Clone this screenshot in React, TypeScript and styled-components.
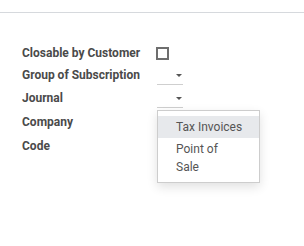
import * as React from 'react';
import styled, { createGlobalStyle } from 'styled-components';

const GlobalStyle = createGlobalStyle`
  html, body {
    margin: 0;
    padding: 0;
    background: #fff;
  }
  body {
    font-family: 'Roboto', 'Liberation Sans', Arial, sans-serif;
    color: #4c4c4c;
  }
`;

const Page = styled.div`
  position: relative;
  width: 304px;
  height: 246px;
  overflow: hidden;
`;

const TopBar = styled.div`
  height: 12px;
  border-bottom: 1px solid #d6d9dd;
`;

const Form = styled.div`
  padding: 29px 0 0 22px;
  display: flex;
  flex-direction: column;
`;

interface IRow {
  h: number;
}

const Row = styled.div<IRow>`
  display: grid;
  grid-template-columns: 135px 26px;
  align-items: center;
  height: ${({ h }) => h}px;
`;

const Label = styled.label`
  font-weight: 700;
  font-size: 12px;
  color: #4a4a4a;
  white-space: nowrap;
`;

const Checkbox = styled.span`
  display: block;
  width: 13px;
  height: 13px;
  margin-left: -1px;
  box-sizing: border-box;
  border: 2px solid #6e6e6e;
  background: #fff;
`;

const Select = styled.div`
  position: relative;
  height: 21px;
  margin-top: -1px;
  border-bottom: 1px solid #cfcfcf;
  box-sizing: border-box;

  &:after {
    content: '';
    position: absolute;
    right: 1px;
    top: 10px;
    border-left: 3.5px solid transparent;
    border-right: 3.5px solid transparent;
    border-top: 3.5px solid #555;
  }
`;

const Menu = styled.ul`
  position: absolute;
  left: 157px;
  top: 110px;
  width: 103px;
  box-sizing: border-box;
  margin: 0;
  padding: 5px 0 4px;
  list-style: none;
  background: #fff;
  border: 1px solid #cdcdcd;
  box-shadow: 0 4px 10px rgba(0, 0, 0, 0.12);
`;

interface IItem {
  active?: boolean;
}

const Item = styled.li<IItem>`
  padding: 2px 10px 2px 18px;
  font-size: 12px;
  line-height: 18px;
  white-space: nowrap;
  color: #555;
  background: ${({ active }) => (active ? '#e7e9ec' : 'transparent')};
`;

const rows = [
  { label: 'Closable by Customer', h: 22, field: 'checkbox' },
  { label: 'Group of Subscription', h: 22, field: 'select' },
  { label: 'Journal', h: 24, field: 'select' },
  { label: 'Company', h: 24, field: 'none' },
  { label: 'Code', h: 24, field: 'none' },
];

export default function App() {
  return (
    <Page>
      <GlobalStyle />
      <TopBar />
      <Form>
        {rows.map(r => (
          <Row key={r.label} h={r.h}>
            <Label>{r.label}</Label>
            {r.field === 'checkbox' && <Checkbox />}
            {r.field === 'select' && <Select />}
            {r.field === 'none' && <span />}
          </Row>
        ))}
      </Form>
      <Menu>
        <Item active>Tax Invoices</Item>
        <Item>
          Point of
          <br />
          Sale
        </Item>
      </Menu>
    </Page>
  );
}
